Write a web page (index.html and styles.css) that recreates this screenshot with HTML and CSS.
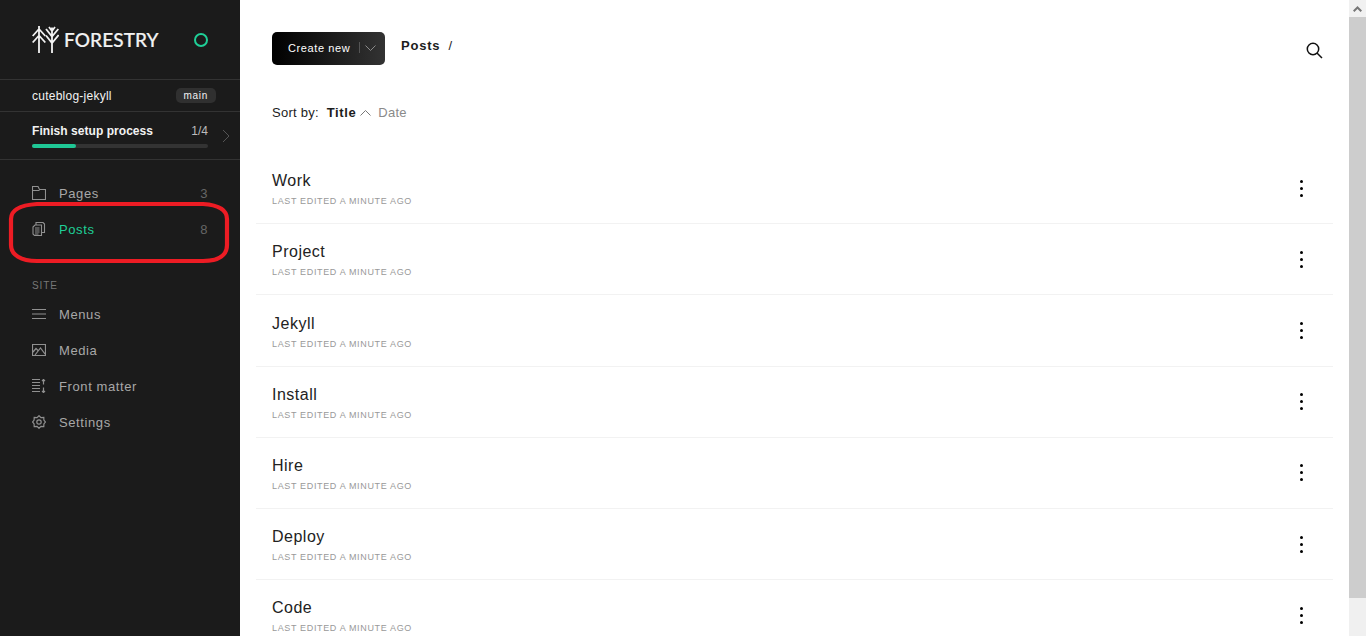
FILE: index.html
```html
<!DOCTYPE html>
<html lang="en">
<head>
    <meta charset="UTF-8">
    <title>Posts - Forestry</title>
    <link rel="stylesheet" href="styles.css">
</head>
<body>

<!-- ===== SIDEBAR ===== -->
<aside class="sidebar">
    <div class="brand">
        <svg class="brand_logo" width="27" height="27" viewBox="0 0 27 27" fill="none" stroke="#f2f2f2" stroke-width="1.8">
            <path d="M7 0V27M0.700 10L7 3L13.300 10M0.700 16.500L7 9.500L13.300 16.500"/>
            <path d="M20 1.500V27M14 3L20 10.500L26.300 3M17 1L20 5L23 1M14 9.500L20 17L26.600 9"/>
        </svg>
        <span class="brand_name">FORESTRY</span>
        <span class="status_dot"></span>
    </div>

    <div class="site_row">
        <span>cuteblog-jekyll</span>
        <span class="branch_badge">main</span>
    </div>

    <div class="setup_row">
        <div class="setup_body">
            <div class="setup_text">
                <span class="setup_title">Finish setup process</span>
                <span class="setup_count">1/4</span>
            </div>
            <div class="setup_track"><div class="setup_fill"></div></div>
        </div>
        <svg class="setup_arrow" width="8" height="14" viewBox="0 0 8 14" fill="none" stroke="#555" stroke-width="1">
            <path d="M1 1L7 7L1 13"/>
        </svg>
    </div>

    <nav class="nav_group">
        <a class="nav_item">
            <svg class="nav_icon" width="14" height="14" viewBox="0 0 14 14" fill="none" stroke="#909090" stroke-width="1.100">
                <path d="M0.500 13.500V0.500H6L7.500 3.500H13.500V13.500ZM0.500 4.500H7.500"/>
            </svg>
            <span class="nav_label">Pages</span>
            <span class="nav_count">3</span>
        </a>
        <a class="nav_item nav_active">
            <svg class="nav_icon" width="14" height="14" viewBox="0 0 14 14" fill="none" stroke="#909090" stroke-width="1.100">
                <path d="M4 3V0.500H11L12.500 2V10.500H9.500M1 5L3 3H9.500V13.500H2.500L1 12ZM3 6H7.500M3 8H7.500M3 10H7.500M3 12H6.500"/>
            </svg>
            <span class="nav_label">Posts</span>
            <span class="nav_count">8</span>
        </a>
    </nav>

    <p class="nav_heading">SITE</p>

    <nav class="nav_group">
        <a class="nav_item">
            <svg class="nav_icon" width="14" height="12" viewBox="0 0 14 12" fill="none" stroke="#909090" stroke-width="1.200">
                <path d="M0 1.500H14M0 6H14M0 10.500H14"/>
            </svg>
            <span class="nav_label">Menus</span>
        </a>
        <a class="nav_item">
            <svg class="nav_icon" width="14" height="12" viewBox="0 0 14 12" fill="none" stroke="#909090" stroke-width="1.200">
                <path d="M0.500 0.500H13.500V11.500H0.500ZM1 8L4 4.500L6.500 7M3 11L8.500 4L13 10"/>
            </svg>
            <span class="nav_label">Media</span>
        </a>
        <a class="nav_item">
            <svg class="nav_icon" width="14" height="14" viewBox="0 0 14 14" fill="none" stroke="#909090" stroke-width="1.200">
                <path d="M0 0.500H8M0 3.500H8M0 6.500H8M0 9.500H8M0 12.500H8"/>
                <path d="M11.500 0.500V5.500M10 2L11.500 0.500L13 2M11.500 8.500V13.500M10 12L11.500 13.500L13 12"/>
            </svg>
            <span class="nav_label">Front matter</span>
        </a>
        <a class="nav_item">
            <svg class="nav_icon" width="14" height="14" viewBox="0 0 14 14" fill="none" stroke="#909090" stroke-width="1.200">
                <path d="M7 0.700L9 2.600L11.800 2.400L11.900 5.100L13.500 7L11.900 8.900L11.800 11.600L9 11.400L7 13.300L5 11.400L2.200 11.600L2.100 8.900L0.500 7L2.100 5.100L2.200 2.400L5 2.600Z"/>
                <circle cx="7" cy="7" r="2.200"/>
            </svg>
            <span class="nav_label">Settings</span>
        </a>
    </nav>

    <!-- hand drawn marker round the Posts item -->
    <svg class="marker" width="226" height="64" viewBox="0 0 226 64" fill="none" stroke="#ed1c24" stroke-width="4.200">
        <path d="M30 3H196C212 4 220 9 220 18V44C220 54 212 60 196 60H30C14 60 4 54 4 44V18C4 9 14 4 30 3Z"/>
    </svg>
</aside>

<!-- ===== MAIN ===== -->
<main class="content">
    <div class="top_bar">
        <button class="create_button">
            <span>Create new</span>
            <span class="create_divider"></span>
            <svg width="11" height="6" viewBox="0 0 11 6" fill="none" stroke="#8a8a8a">
                <path d="M0.500 0.500L5.500 5.500L10.500 0.500"/>
            </svg>
        </button>
        <div class="breadcrumb"><span class="bold_display">Posts</span><span class="crumb_slash">/</span></div>
        <svg class="search_icon" width="17" height="17" viewBox="0 0 17 17" fill="none" stroke="#111" stroke-width="1.500">
            <circle cx="7" cy="7" r="5.700"/>
            <path d="M11 11L16 16"/>
        </svg>
    </div>

    <div class="sort_bar">
        <span>Sort by:</span>
        <span class="sort_active">Title</span>
        <svg width="11" height="6" viewBox="0 0 11 6" fill="none" stroke="#777">
            <path d="M0.500 5.500L5.500 0.500L10.500 5.500"/>
        </svg>
        <span class="sort_other">Date</span>
    </div>

    <div class="post_list">
        <div class="post_row">
            <div class="post_text"><span class="post_title">Work</span><span class="post_meta">LAST EDITED A MINUTE AGO</span></div>
            <div class="dots"><i></i><i></i><i></i></div>
        </div>
        <div class="post_row">
            <div class="post_text"><span class="post_title">Project</span><span class="post_meta">LAST EDITED A MINUTE AGO</span></div>
            <div class="dots"><i></i><i></i><i></i></div>
        </div>
        <div class="post_row">
            <div class="post_text"><span class="post_title">Jekyll</span><span class="post_meta">LAST EDITED A MINUTE AGO</span></div>
            <div class="dots"><i></i><i></i><i></i></div>
        </div>
        <div class="post_row">
            <div class="post_text"><span class="post_title">Install</span><span class="post_meta">LAST EDITED A MINUTE AGO</span></div>
            <div class="dots"><i></i><i></i><i></i></div>
        </div>
        <div class="post_row">
            <div class="post_text"><span class="post_title">Hire</span><span class="post_meta">LAST EDITED A MINUTE AGO</span></div>
            <div class="dots"><i></i><i></i><i></i></div>
        </div>
        <div class="post_row">
            <div class="post_text"><span class="post_title">Deploy</span><span class="post_meta">LAST EDITED A MINUTE AGO</span></div>
            <div class="dots"><i></i><i></i><i></i></div>
        </div>
        <div class="post_row">
            <div class="post_text"><span class="post_title">Code</span><span class="post_meta">LAST EDITED A MINUTE AGO</span></div>
            <div class="dots"><i></i><i></i><i></i></div>
        </div>
    </div>
</main>

<!-- ===== SCROLLBAR ===== -->
<div class="scrollbar">
    <div class="scroll_button">
        <svg width="9" height="6" viewBox="0 0 9 6" fill="none" stroke="#777" stroke-width="2">
            <path d="M0.700 5.300L4.500 1.500L8.300 5.300"/>
        </svg>
    </div>
    <div class="scroll_thumb"></div>
</div>

</body>
</html>
```

FILE: styles.css
```css
html, body {
    height: 100%;
}

body {
    margin: 0;
    height: 636px;
    overflow: hidden;
    display: flex;
    font-family: 'Liberation Sans', Arial, sans-serif;
    background-color: #fff;
    color: #1c1c1c;
}

.bold_display {
    font-weight: bold;
}

/* ===== Sidebar ===== */
.sidebar {
    position: relative;
    width: 240px;
    flex-shrink: 0;
    background-color: #1b1b1b;
    color: #f2f2f2;
}

.brand {
    height: 80px;
    box-sizing: border-box;
    padding: 0 32px;
    display: flex;
    align-items: center;
    border-bottom: 1px solid #333;
}

.brand_logo {
    flex-shrink: 0;
}

.brand_name {
    margin-left: 5px;
    font-family: 'Lato', sans-serif;
    font-size: 19px;
    font-weight: 500;
    letter-spacing: 0.1px;
    color: #f2f2f2;
    -webkit-text-stroke: 0.2px #f2f2f2;
}

.status_dot {
    width: 14px;
    height: 14px;
    box-sizing: border-box;
    margin-left: auto;
    border: 2px solid #1fcf97;
    border-radius: 50%;
}

.site_row {
    height: 32px;
    box-sizing: border-box;
    padding: 0 24px 0 32px;
    display: flex;
    align-items: center;
    justify-content: space-between;
    border-bottom: 1px solid #333;
    font-size: 12px;
    letter-spacing: 0.25px;
}

.branch_badge {
    padding: 2px 8px;
    border-radius: 5px;
    background-color: #303030;
    font-size: 10px;
    letter-spacing: 0.7px;
}

.setup_row {
    height: 48px;
    box-sizing: border-box;
    padding-left: 32px;
    display: flex;
    align-items: center;
    border-bottom: 1px solid #333;
}

.setup_body {
    width: 176px;
    flex-shrink: 0;
}

.setup_text {
    display: flex;
    justify-content: space-between;
    font-size: 12px;
    margin-bottom: 6px;
}

.setup_title {
    font-weight: bold;
    letter-spacing: 0.05px;
}

.setup_count {
    color: #bbb;
}

.setup_track {
    height: 4px;
    border-radius: 2px;
    background-color: #333;
}

.setup_fill {
    width: 25%;
    height: 100%;
    border-radius: 2px;
    background-color: #1fc795;
}

.setup_arrow {
    margin-left: 14px;
}

.nav_group {
    display: flex;
    flex-direction: column;
}

.setup_row + .nav_group {
    margin-top: 15px;
}

.nav_item {
    height: 36px;
    padding: 0 32px;
    display: flex;
    align-items: center;
    font-size: 13px;
    letter-spacing: 0.6px;
    color: #a8a8a8;
}

.nav_icon {
    width: 14px;
    flex-shrink: 0;
    margin-right: 13px;
}

.nav_count {
    margin-left: auto;
    color: #666;
    font-size: 13px;
}

.nav_active .nav_label {
    color: #1fcf97;
}

.nav_heading {
    margin: 33px 32px 4px;
    font-size: 10px;
    line-height: 12px;
    letter-spacing: 0.9px;
    color: #777;
}

.marker {
    position: absolute;
    left: 7px;
    top: 201px;
}

/* ===== Main ===== */
.content {
    flex: 1;
    min-width: 0;
    padding: 32px 16px 0;
    overflow: hidden;
}

.top_bar {
    padding-left: 16px;
    display: flex;
    align-items: flex-start;
}

.create_button {
    width: 113px;
    height: 33px;
    padding: 0 8px 2px 16px;
    display: flex;
    align-items: center;
    border: none;
    border-radius: 5px;
    background: linear-gradient(90deg, #000, #333);
    color: #fff;
    font-family: inherit;
    font-size: 11px;
    letter-spacing: 0.6px;
}

.create_divider {
    width: 1px;
    height: 11px;
    margin: 0 5px 0 9px;
    background-color: #555;
}

.breadcrumb {
    margin-left: 16px;
    margin-top: 6px;
    font-size: 13px;
    letter-spacing: 0.8px;
}

.crumb_slash {
    margin-left: 8px;
}

.search_icon {
    margin-left: auto;
    margin-top: 10px;
    margin-right: 10px;
}

.sort_bar {
    margin-top: 39px;
    padding-left: 16px;
    display: flex;
    align-items: center;
    font-size: 13px;
    line-height: 18px;
    letter-spacing: 0.25px;
}

.sort_active {
    margin-left: 8px;
    margin-right: 4px;
    font-weight: bold;
    letter-spacing: 0.6px;
}

.sort_other {
    margin-left: 7px;
    color: #8a8a8a;
}

.post_list {
    margin-top: 31px;
}

.post_row {
    height: 71.2px;
    box-sizing: border-box;
    padding: 0 30px 0 16px;
    display: flex;
    align-items: center;
    justify-content: space-between;
    border-bottom: 1px solid #f2f2f2;
}

.post_text {
    margin-top: 2.4px;
    display: flex;
    flex-direction: column;
}

.post_title {
    font-size: 16px;
    line-height: 20px;
    letter-spacing: 0.5px;
    color: #222;
}

.post_meta {
    margin-top: 5px;
    font-size: 9px;
    line-height: 11px;
    letter-spacing: 0.65px;
    color: #999;
}

.dots {
    display: flex;
    flex-direction: column;
    gap: 4px;
}

.dots i {
    width: 3px;
    height: 3px;
    border-radius: 50%;
    background-color: #000;
}

/* ===== Scrollbar ===== */
.scrollbar {
    width: 17px;
    flex-shrink: 0;
    background-color: #f0f0f0;
    display: flex;
    flex-direction: column;
}

.scroll_button {
    height: 17px;
    display: flex;
    align-items: center;
    justify-content: center;
    background-color: #f1f1f1;
}

.scroll_thumb {
    height: 581px;
    background-color: #cdcdcd;
}
```
